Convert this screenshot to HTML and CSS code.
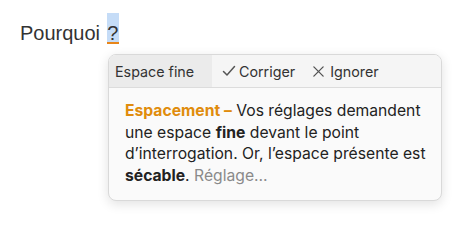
FILE: index.html
```html
<!DOCTYPE html>
<html lang="fr">
<head>
<meta charset="utf-8">
<link rel="stylesheet" href="styles.css">
</head>
<body>
<div class="doc">
  <p class="line">Pourquoi <span class="err">?</span></p>
  <div class="popup">
    <div class="bar">
      <div class="seg label">Espace fine</div>
      <div class="seg action fix">
        <svg class="ico" viewBox="0 0 14 14" width="14" height="14"><path d="M1.5 7.5 L5 11 L12.5 2.5" fill="none" stroke="#555" stroke-width="1.5" stroke-linecap="round" stroke-linejoin="round"/></svg>
        <span>Corriger</span>
      </div>
      <div class="seg action skip">
        <svg class="ico" viewBox="0 0 14 14" width="13" height="13"><path d="M2 2 L12 12 M12 2 L2 12" fill="none" stroke="#555" stroke-width="1.4" stroke-linecap="round"/></svg>
        <span>Ignorer</span>
      </div>
    </div>
    <div class="msg">
      <span class="kind">Espacement –</span> Vos réglages demandent une espace <b>fine</b> devant le point d’interrogation. Or, l’espace présente est <b>sécable</b>. <span class="set">Réglage…</span>
    </div>
  </div>
</div>
</body>
</html>
```
FILE: styles.css
```css
html, body {
  margin: 0;
  padding: 0;
  background: #ffffff;
}
.doc {
  position: relative;
  width: 474px;
  height: 230px;
}
.line {
  margin: 0;
  padding: 13px 0 0 20px;
  font-family: "Liberation Sans", Arial, sans-serif;
  font-size: 20px;
  line-height: 22px;
  color: #333;
}
.err {
  display: inline-block;
  background: #c5dcf7;
  padding: 10px 0.5px 0 0.5px;
  margin-left: 1px;
  height: 19px;
  line-height: 20px;
  border-bottom: 2px solid #e8861a;
}
.popup {
  position: absolute;
  left: 108px;
  top: 54px;
  width: 332px;
  background: #fafafa;
  border: 1px solid #d9d9d9;
  border-radius: 8px;
  box-shadow: 0 3px 12px rgba(0,0,0,0.12);
  overflow: hidden;
  font-family: Inter, "Noto Sans", sans-serif;
  color: #222;
}
.bar {
  display: flex;
  align-items: stretch;
  height: 32px;
  background: #f5f5f5;
  border-bottom: 1px solid #dcdcdc;
  font-size: 14.3px;
}
.seg {
  display: flex;
  align-items: center;
}
.label {
  background: #ebebeb;
  width: 103px;
  padding-left: 6px;
  box-sizing: border-box;
  color: #333;
}
.action {
  gap: 3px;
  color: #333;
}
.fix {
  padding-left: 10px;
}
.skip {
  padding-left: 17px;
  gap: 5px;
}
.ico {
  display: block;
}
.msg {
  padding: 12px 10px 14px 16px;
  font-size: 15.7px;
  line-height: 21.5px;
  color: #222;
}
.kind {
  color: #e08c0c;
  font-weight: 700;
}
.msg b {
  font-weight: 700;
}
.set {
  color: #8a8a8a;
}
```
